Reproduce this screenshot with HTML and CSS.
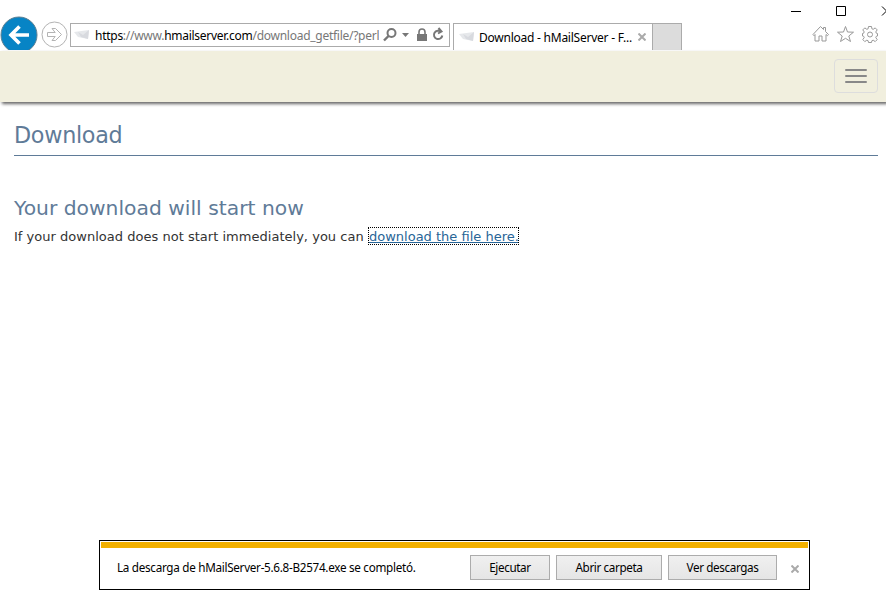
FILE: index.html
```
<!DOCTYPE html>
<html lang="en">
<head>
<meta charset="utf-8">
<title>Download - hMailServer</title>
<link rel="stylesheet" href="styles.css">
</head>
<body>
<header class="chrome">
  <div class="titlebar">
    <svg class="window-controls" width="96" height="23" viewBox="0 0 96 23" fill="none" stroke="#000">
      <path d="M1 11.5H11M46.500 6.500h9v9h-9zM92 6.500l9 9M92 15.500l9-9"/>
    </svg>
  </div>
  <div class="toolbar">
    <svg class="back" width="38" height="34" viewBox="0 0 38 34">
      <circle cx="19" cy="19" r="18" fill="#0784c5" stroke="#5d7f92"/>
      <path d="M29 19H11M19.500 10.500L11 19l8.500 8.500" fill="none" stroke="#fff" stroke-width="3.600"/>
    </svg>
    <svg class="forward" width="27" height="27" viewBox="0 0 27 27" fill="none" stroke="#b3b3b3">
      <circle cx="13.500" cy="13.500" r="12.500"/>
      <path d="M6.500 11.500h7.700l-3.200-4h3.500l6 6-6 6H11l3.200-4H6.500z"/>
    </svg>
    <div class="address">
      <svg class="favicon" width="16" height="10" viewBox="0 0 16 10"><path d="M0 2L15 0l-1 9L4 7z" fill="#e6e8eb"/><path d="M4 2l5 3 6-5-1 9-7-2z" fill="#d8dadf"/></svg>
      <span class="url"><b>https</b>://www.<b>hmailserver.com</b>/download_getfile/?perl</span>
      <svg class="address-icons" width="64" height="16" viewBox="0 0 64 16" fill="none" stroke="#777">
        <circle cx="8.500" cy="6" r="4" stroke-width="2"/><path d="M5.500 9L1 13.500" stroke-width="2.400"/>
        <path d="M19 6h7l-3.500 4z" fill="#777" stroke="none"/>
        <path d="M34 7h10v7H34z" fill="#777" stroke="none"/><path d="M36 7V5a3 3 0 0 1 6 0v2" stroke-width="1.600"/>
        <path d="M58 4.800A4.200 4.200 0 1 0 59.300 8.500M55.500 1l3 3.500-3.500 2" stroke-width="2"/>
      </svg>
    </div>
    <div class="tab">
      <svg class="favicon" width="16" height="10" viewBox="0 0 16 10"><path d="M0 2L15 0l-1 9L4 7z" fill="#e6e8eb"/><path d="M4 2l5 3 6-5-1 9-7-2z" fill="#d8dadf"/></svg>
      <span class="tab-title">Download - hMailServer - F...</span>
      <svg class="tab-close" width="8" height="8" viewBox="0 0 8 8" stroke="#aaa" stroke-width="2"><path d="M.5.5l7 7M7.500.5l-7 7"/></svg>
    </div>
    <div class="new-tab"></div>
    <svg class="tools" width="66" height="18" viewBox="0 0 66 18" fill="none" stroke="#999">
      <path d="M1 9.500L8.500 1.500l3 3v-2h2v4l3 3-1 1.200-1.500-1.200v6.500h-4v-5h-3v5h-4V9.500L2 10.700z"/>
      <path d="M33.500 1.500l2 5.500 6 .2-4.700 3.800 1.700 5.500-5-3.200-5 3.200 1.700-5.500-4.700-3.800 6-.2z"/>
      <path d="M56.500 1.500h3l.4 2.300 1.300.5 2-1.400 2 2-1.400 2 .5 1.300 1.200.3v2.500l-1.200.3-.5 1.300 1.400 2-2 2-2-1.400-1.300.5-.4 1.800h-3l-.4-1.800-1.300-.5-2 1.400-2-2 1.400-2-.5-1.300-1.200-.3V8.500l1.200-.3.5-1.300-1.400-2 2-2 2 1.400 1.300-.5z"/>
      <circle cx="58" cy="9.500" r="2.500"/>
    </svg>
  </div>
</header>
<nav class="navbar">
  <div class="menu-toggle"><i></i><i></i><i></i></div>
</nav>
<main class="content">
  <h1><span>Download</span></h1>
  <h2><span>Your download will start now</span></h2>
  <p><span class="lead">If your download does not start immediately, you can</span> <a href="#">download the file here.</a></p>
</main>
<footer class="notice">
  <div class="notice-stripe"></div>
  <div class="notice-row">
    <span class="message">La descarga de hMailServer-5.6.8-B2574.exe se completó.</span>
    <div class="button run"><span>Ejecutar</span></div>
    <div class="button folder"><span>Abrir carpeta</span></div>
    <div class="button view"><span>Ver descargas</span></div>
    <svg class="notice-close" width="8" height="8" viewBox="0 0 8 8" stroke="#aaa" stroke-width="2"><path d="M.5.5l7 7M7.500.5l-7 7"/></svg>
  </div>
</footer>
</body>
</html>
```
FILE: styles.css
```
* { box-sizing: border-box; }
body {
  margin: 0;
  width: 886px;
  height: 590px;
  overflow: hidden;
  display: flex;
  flex-direction: column;
  background: #fff;
  font-family: "Noto Sans", "Open Sans", sans-serif;
  font-size: 12px;
  color: #000;
}
svg { display: block; flex: none; }
.chrome { height: 51px; flex: none; }
.titlebar { height: 23px; display: flex; justify-content: flex-end; }
.toolbar { height: 28px; display: flex; align-items: flex-start; }
.back { margin-top: -7px; }
.forward { margin: -2px 2px 0 3px; }
.address {
  width: 380px; height: 24px; flex: none;
  border: 1px solid #ababab;
  display: flex; align-items: center;
  padding-left: 3px;
}
.url {
  width: 284px; flex: none;
  margin-left: 5px; padding-top: 2px;
  overflow: hidden; white-space: nowrap;
  color: #777; line-height: 20px;
  letter-spacing: -0.27px;
}
.url b { font-weight: 400; color: #000; }
.address-icons { margin-left: 4px; }
.tab {
  width: 200px; height: 27px; flex: none; margin-left: 3px;
  border: 1px solid #ababab; border-bottom: 0;
  display: flex; align-items: center;
  padding-left: 5px;
}
.tab-title { width: 154px; margin-left: 4px; white-space: nowrap; letter-spacing: -0.24px; }
.tab-close { margin-left: 5px; }
.new-tab { width: 29px; height: 27px; background: #dcdcdc; border: 1px solid #ababab; border-width: 1px 1px 0 0; }
.tools { margin: 2px 8px 0 auto; }
.navbar {
  height: 51px; flex: none;
  background: #f1efde;
  box-shadow: 2px 2px 3px #666;
  display: flex; justify-content: flex-end;
  padding: 8px 8px 0;
}
.menu-toggle {
  width: 44px; height: 34px;
  border: 1px solid #ddd; border-radius: 4px;
  display: flex; flex-direction: column; align-items: center; justify-content: center; gap: 4px;
}
.menu-toggle i { width: 22px; height: 2px; background: #888; border-radius: 1px; }
.content {
  flex: 1; padding: 17px 8px 0 14px;
  font-family: "DejaVu Sans", sans-serif;
  color: #333;
}
h1, h2, p { margin: 0; white-space: nowrap; font-weight: 400; }
h1, h2 { color: #5f7b98; }
h1 { height: 37px; line-height: 32px; font-size: 22.3px; border-bottom: 1px solid #5f7b98; letter-spacing: -0.3px; }
h2 { margin-top: 36px; height: 32px; line-height: 32px; font-size: 20.3px; letter-spacing: 0; }
p { margin-top: 5px; font-size: 13px; line-height: 16px; display: flex; }
.lead { width: 355px; letter-spacing: 0.02px; }
a { color: #286597; outline: 1px dotted #000; width: 149px; height: 16px; margin-top: -1px; line-height: 18px; text-decoration: underline; }
.notice {
  width: 711px; height: 50px; flex: none; margin-left: 99px;
  border: 1px solid #000; padding: 1px;
}
.notice-stripe { height: 6px; background: #f2b000; }
.notice-row { height: 38px; display: flex; align-items: center; padding-left: 16px; white-space: nowrap; }
.message { width: 353px; font-size: 11.7px; letter-spacing: -0.29px; }
.button {
  height: 25px; margin-right: 6px; flex: none;
  display: flex; align-items: center; justify-content: center;
  border: 1px solid #acacac; background: linear-gradient(#f0f0f0, #e5e5e5);
  font-size: 11.7px;
  letter-spacing: -0.38px;
}
.run { width: 80px; }
.folder { width: 106px; }
.view { width: 109px; }
.notice-close { margin: 4px 0 0 8px; }
```
